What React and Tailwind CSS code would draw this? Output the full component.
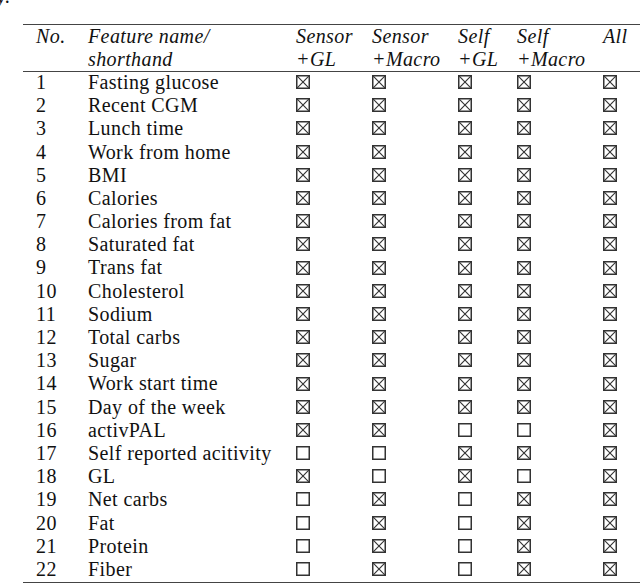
import React from 'react';

const rows = [
  ['1', 'Fasting glucose', [1, 1, 1, 1, 1]],
  ['2', 'Recent CGM', [1, 1, 1, 1, 1]],
  ['3', 'Lunch time', [1, 1, 1, 1, 1]],
  ['4', 'Work from home', [1, 1, 1, 1, 1]],
  ['5', 'BMI', [1, 1, 1, 1, 1]],
  ['6', 'Calories', [1, 1, 1, 1, 1]],
  ['7', 'Calories from fat', [1, 1, 1, 1, 1]],
  ['8', 'Saturated fat', [1, 1, 1, 1, 1]],
  ['9', 'Trans fat', [1, 1, 1, 1, 1]],
  ['10', 'Cholesterol', [1, 1, 1, 1, 1]],
  ['11', 'Sodium', [1, 1, 1, 1, 1]],
  ['12', 'Total carbs', [1, 1, 1, 1, 1]],
  ['13', 'Sugar', [1, 1, 1, 1, 1]],
  ['14', 'Work start time', [1, 1, 1, 1, 1]],
  ['15', 'Day of the week', [1, 1, 1, 1, 1]],
  ['16', 'activPAL', [1, 1, 0, 0, 1]],
  ['17', 'Self reported acitivity', [0, 0, 1, 1, 1]],
  ['18', 'GL', [1, 0, 1, 0, 1]],
  ['19', 'Net carbs', [0, 1, 0, 1, 1]],
  ['20', 'Fat', [0, 1, 0, 1, 1]],
  ['21', 'Protein', [0, 1, 0, 1, 1]],
  ['22', 'Fiber', [0, 1, 0, 1, 1]],
];

const headers = [
  ['Sensor', '+GL'],
  ['Sensor', '+Macro'],
  ['Self', '+GL'],
  ['Self', '+Macro'],
  ['All', ''],
];

// ballot box, with or without the cross
function Box({ on }) {
  return (
    <svg width="14" height="14" viewBox="0 0 14 14" className="mt-[-3px]">
      <rect x="0.75" y="0.75" width="12.5" height="12.5" fill="none" stroke="#333" strokeWidth="1.5" />
      {on ? (
        <g stroke="#333" strokeWidth="1.1">
          <line x1="1.2" y1="1.2" x2="12.8" y2="12.8" />
          <line x1="12.8" y1="1.2" x2="1.2" y2="12.8" />
        </g>
      ) : null}
    </svg>
  );
}

const cols = 'grid grid-cols-[52px_208px_76px_86px_59px_86px_1fr] pl-[13px]';

export default function App() {
  return (
    <div className="w-[640px] h-[585px] overflow-hidden bg-white text-[#111] font-['Liberation_Serif',serif] text-[20px] tracking-[0.4px]">
      <div className="h-[24px] overflow-hidden">
        <div className="italic -mt-[15px] -ml-[3px] leading-[23px]">y.</div>
      </div>

      <div className="ml-[23px] border-t-[1.5px] border-b-[1.5px] border-[#444]">
        {/* header */}
        <div className={`${cols} italic leading-[23px] border-b border-[#444]`}>
          <div>No.</div>
          <div>
            Feature name/
            <br />
            shorthand
          </div>
          {headers.map((h, i) => (
            <div key={i}>
              {h[0]}
              <br />
              {h[1]}
            </div>
          ))}
        </div>

        {/* body */}
        {rows.map(([n, name, marks]) => (
          <div key={n} className={`${cols} h-[23.2px] leading-[23.2px] items-center`}>
            <div className="-mt-[2px]">{n}</div>
            <div className="whitespace-nowrap -mt-[2px]">{name}</div>
            {marks.map((m, i) => (
              <div key={i} className="flex items-center">
                <Box on={m} />
              </div>
            ))}
          </div>
        ))}
      </div>
    </div>
  );
}
